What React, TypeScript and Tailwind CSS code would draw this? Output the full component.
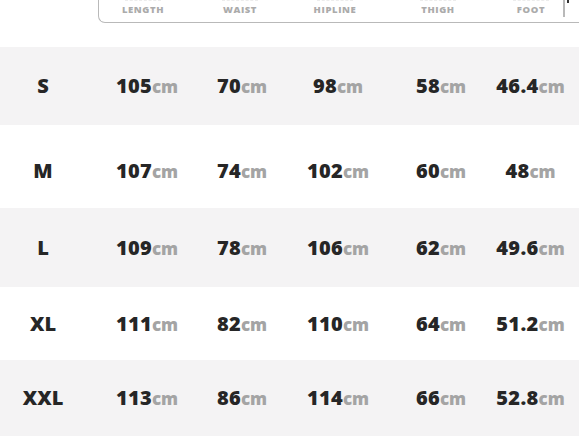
const rows = [
  { size: "S", values: ["105", "70", "98", "58", "46.4"], bg: "bg-[#f4f3f4]", h: "h-[78px]", pad: "" },
  { size: "M", values: ["107", "74", "102", "60", "48"], bg: "bg-white", h: "h-[83px]", pad: "pt-[9px]" },
  { size: "L", values: ["109", "78", "106", "62", "49.6"], bg: "bg-[#f4f3f4]", h: "h-[79px]", pad: "" },
  { size: "XL", values: ["111", "82", "110", "64", "51.2"], bg: "bg-white", h: "h-[73px]", pad: "" },
  { size: "XXL", values: ["113", "86", "114", "66", "52.8"], bg: "bg-[#f4f3f4]", h: "h-[76px]", pad: "" },
];

const labels = [
  { text: "LENGTH", w: "w-[88px]" },
  { text: "WAIST", w: "w-[106px]" },
  { text: "HIPLINE", w: "w-[84px]" },
  { text: "THIGH", w: "w-[122px]" },
  { text: "FOOT", w: "w-[64px]" },
];

const cols = "grid grid-cols-[86px_122px_68px_124px_82px_97px]";

export default function App() {
  return (
    <div className="h-[436px] w-[579px] overflow-hidden bg-white font-['Open_Sans',sans-serif]">
      {/* header box, cut off at the top */}
      <div className="h-[47px] bg-white pl-[98px]">
        <div className="flex h-[23px] rounded-bl-[7px] border-b-[1.5px] border-l-[1.5px] border-[#b9b9b9]">
          {labels.map((l) => (
            <div key={l.text} className={`relative flex ${l.w} items-end justify-center pb-[8px]`}>
              <div className="absolute top-0 h-px w-[36px] border-t border-dashed border-[#ececec]" />
              <span className="text-[9.5px] leading-none font-extrabold tracking-[0.6px] text-[#ababab]">
                {l.text}
              </span>
            </div>
          ))}
          <div className="relative h-[17px] w-[1.5px] bg-[#b9b9b9]">
            <div className="absolute top-0 left-[4px] h-[3px] w-[2px] bg-[#333]" />
          </div>
        </div>
      </div>

      {rows.map((r) => (
        <div key={r.size} className={`${cols} ${r.h} ${r.bg} ${r.pad} items-center`}>
          <div className="text-center text-[20px] leading-none font-extrabold text-[#262626]">{r.size}</div>
          {r.values.map((v, i) => (
            <div key={i} className="flex items-baseline justify-center leading-none">
              <span className="text-[20px] font-extrabold tracking-[0.3px] text-[#262626]">{v}</span>
              <span className="text-[17px] font-extrabold text-[#a4a4a4]">cm</span>
            </div>
          ))}
        </div>
      ))}
    </div>
  );
}
